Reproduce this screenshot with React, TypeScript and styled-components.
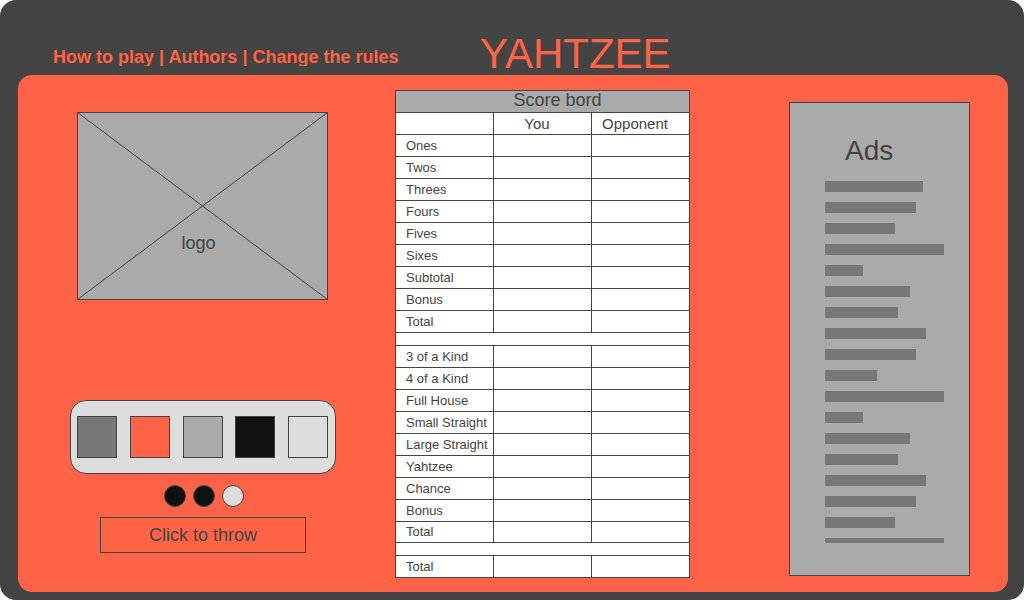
import React from "react";
import styled, { createGlobalStyle } from "styled-components";

const ink = "#444";
const tomato = "#ff6347";
const silver = "#aaa";

const GlobalStyle = createGlobalStyle`
  *, *::before, *::after { box-sizing: border-box; }
  body {
    margin: 0;
    background: #fff;
    color: ${ink};
    font-family: "Liberation Sans", Arial, sans-serif;
  }
`;

const Shell = styled.div`
  display: flex;
  flex-direction: column;
  min-height: 100vh;
  padding: 0 16px 8px 18px;
  border-radius: 16px;
  background: ${ink};
`;

const Header = styled.header`
  display: grid;
  grid-template-columns: 427px 1fr;
  align-items: end;
  height: 75px;
  padding-left: 35px;
  color: ${tomato};
`;

const Nav = styled.nav`
  height: 20px;
  margin-bottom: 9px;
  overflow: hidden;
  font-size: 18px;
  font-weight: bold;
  line-height: 22px;
  white-space: nowrap;
`;

const NavLink = styled.a`
  color: inherit;
  text-decoration: none;
`;

const Title = styled.h1`
  margin: 0;
  font-size: 42px;
  font-weight: normal;
  line-height: 42px;
`;

const Board = styled.main`
  flex: 1;
  display: grid;
  grid-template-columns: 65fr 295px 56fr;
  align-items: start;
  padding: 15px 38px 14px 52px;
  border-radius: 14px;
  background: ${tomato};
`;

const PlayArea = styled.section`
  display: flex;
  flex-direction: column;
  align-items: center;
  width: 266px;
  padding-top: 22px;
`;

const LogoBox = styled.div`
  position: relative;
  align-self: flex-start;
  display: flex;
  width: 251px;
  height: 188px;
  margin: 0 0 100px 7px;
  background: ${silver};
`;

const Cross = styled.svg`
  display: block;
  width: 100%;
  height: 100%;
`;

const LogoLabel = styled.span`
  position: absolute;
  top: 120px;
  left: 0;
  right: 8px;
  font-size: 18px;
  line-height: 22px;
  text-align: center;
`;

const Tray = styled.div`
  display: flex;
  align-items: center;
  justify-content: space-between;
  width: 100%;
  height: 74px;
  padding: 0 7px 0 6px;
  border: 1px solid ${ink};
  border-radius: 16px;
  background: #ddd;
`;

const Die = styled.div<{ $fill: string }>`
  width: 40px;
  height: 42px;
  border: 1px solid ${ink};
  background: ${(p) => p.$fill};
`;

const Throws = styled.div`
  display: flex;
  gap: 7px;
  margin: 11px 0 10px;
  padding-left: 2px;
`;

const ThrowDot = styled.span<{ $used: boolean }>`
  width: 22px;
  height: 22px;
  border: 1px solid ${ink};
  border-radius: 50%;
  background: ${(p) => (p.$used ? "#111" : "#ddd")};
`;

const ThrowButton = styled.button`
  width: 206px;
  height: 36px;
  padding: 0;
  border: 1px solid ${ink};
  background: transparent;
  color: ${ink};
  font: 18px "Liberation Sans", Arial, sans-serif;
`;

const ScoreTable = styled.table`
  width: 100%;
  table-layout: fixed;
  border-collapse: collapse;
  background: #fff;
`;

const Row = styled.tr<{ $height?: number }>`
  height: ${(p) => p.$height ?? 22}px;
`;

const Cell = styled.td`
  padding: 0;
  border: 1px solid ${ink};
`;

const BoardTitle = styled.th`
  padding: 0 0 3px 30px;
  border: 1px solid ${ink};
  background: ${silver};
  font-size: 18px;
  font-weight: normal;
  line-height: 18px;
`;

const PlayerName = styled.th`
  padding: 0 11px 0 0;
  border: 1px solid ${ink};
  font-size: 15px;
  font-weight: normal;
  line-height: 18px;
`;

const RowLabel = styled.th`
  padding: 0 0 0 10px;
  border: 1px solid ${ink};
  font-size: 13px;
  font-weight: normal;
  line-height: 18px;
  text-align: left;
  white-space: nowrap;
`;

const AdsPanel = styled.aside`
  justify-self: end;
  width: 181px;
  height: 474px;
  margin-top: 12px;
  padding: 32px 24px 32px 35px;
  border: 1px solid ${ink};
  background: ${silver};
`;

const AdsTitle = styled.h2`
  margin: 0 0 14px;
  padding-left: 20px;
  font-size: 28px;
  font-weight: normal;
  line-height: 32px;
`;

const AdLines = styled.div`
  display: flex;
  flex-direction: column;
  gap: 10px;
  height: 362px;
  overflow: hidden;
`;

const AdLine = styled.div<{ $width: number }>`
  flex: none;
  width: ${(p) => p.$width}px;
  height: 11px;
  background: #777;
`;

const dice = ["#777", tomato, silver, "#111", "#ddd"];
const throwsUsed = [true, true, false];
const upper = ["Ones", "Twos", "Threes", "Fours", "Fives", "Sixes", "Subtotal", "Bonus", "Total"];
const lower = ["3 of a Kind", "4 of a Kind", "Full House", "Small Straight", "Large Straight", "Yahtzee", "Chance", "Bonus"];
const adLines = [98, 91, 70, 119, 38, 85, 73, 101, 91, 52, 119, 38, 85, 73, 101, 91, 70, 119];

function ScoreRow({ label, height }: { label: string; height?: number }) {
  return (
    <Row $height={height}>
      <RowLabel scope="row">{label}</RowLabel>
      <Cell />
      <Cell />
    </Row>
  );
}

function Divider() {
  return (
    <Row $height={13}>
      <Cell colSpan={3} />
    </Row>
  );
}

export default function App() {
  return (
    <>
      <GlobalStyle />
      <Shell>
        <Header>
          <Nav>
            <NavLink href="#how">How to play</NavLink> | <NavLink href="#authors">Authors</NavLink> |{" "}
            <NavLink href="#rules">Change the rules</NavLink>
          </Nav>
          <Title>YAHTZEE</Title>
        </Header>
        <Board>
          <PlayArea>
            <LogoBox>
              <Cross viewBox="0 0 251 188" fill="none" stroke={ink} aria-hidden="true">
                <rect x="0.5" y="0.5" width="250" height="187" />
                <path d="M0.5 0.5 L250.5 187.5 M250.5 0.5 L0.5 187.5" />
              </Cross>
              <LogoLabel>logo</LogoLabel>
            </LogoBox>
            <Tray>
              {dice.map((fill) => (
                <Die key={fill} $fill={fill} />
              ))}
            </Tray>
            <Throws>
              {throwsUsed.map((used, i) => (
                <ThrowDot key={i} $used={used} />
              ))}
            </Throws>
            <ThrowButton type="button">Click to throw</ThrowButton>
          </PlayArea>
          <ScoreTable>
            <colgroup>
              <col />
              <col />
              <col />
            </colgroup>
            <thead>
              <Row>
                <BoardTitle colSpan={3}>Score bord</BoardTitle>
              </Row>
              <Row>
                <Cell />
                <PlayerName scope="col">You</PlayerName>
                <PlayerName scope="col">Opponent</PlayerName>
              </Row>
            </thead>
            <tbody>
              {upper.map((label) => (
                <ScoreRow key={label} label={label} />
              ))}
              <Divider />
              {lower.map((label) => (
                <ScoreRow key={label} label={label} />
              ))}
              <ScoreRow label="Total" height={21} />
              <Divider />
              <ScoreRow label="Total" />
            </tbody>
          </ScoreTable>
          <AdsPanel>
            <AdsTitle>Ads</AdsTitle>
            <AdLines>
              {adLines.map((width, i) => (
                <AdLine key={i} $width={width} />
              ))}
            </AdLines>
          </AdsPanel>
        </Board>
      </Shell>
    </>
  );
}
